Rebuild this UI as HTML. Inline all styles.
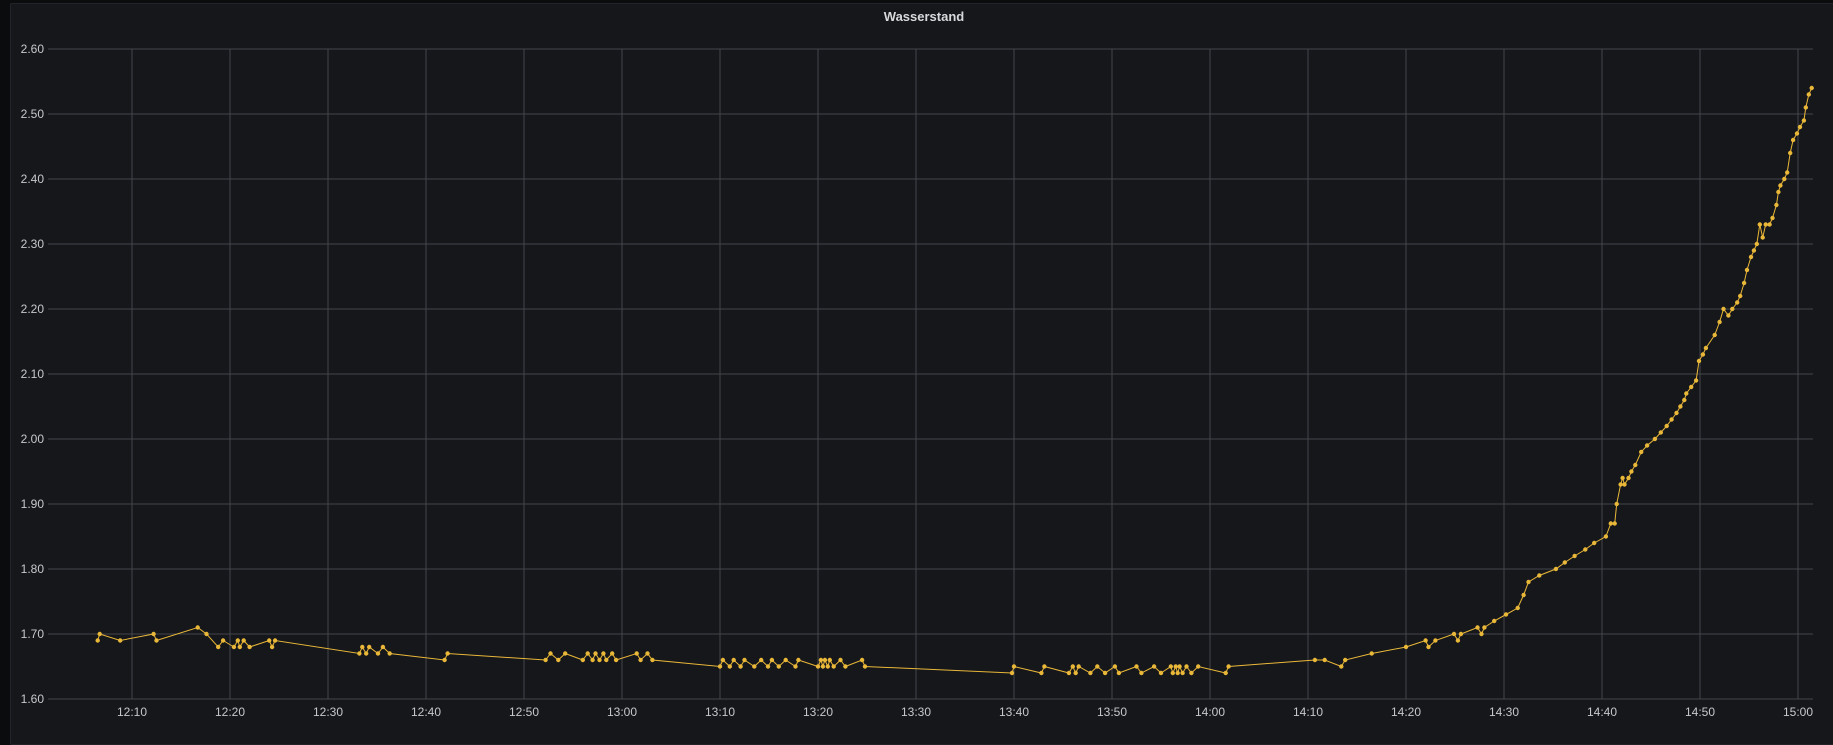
<!DOCTYPE html>
<html><head><meta charset="utf-8"><style>
html,body{margin:0;padding:0;background:#0b0c0e;width:1833px;height:730px;overflow:hidden;font-family:"Liberation Sans",sans-serif}
#panel{position:absolute;left:10px;top:3px;width:1830px;height:740px;background:#16171b;border:1px solid #222429;border-radius:2px}
#title{position:absolute;left:0;width:1848px;top:9px;text-align:center;color:#d8d9da;font-size:13px;font-weight:bold}
.yl{position:absolute;left:0;width:44px;text-align:right;color:#c7c8cc;font-size:12px;line-height:14px}
.xl{position:absolute;width:60px;text-align:center;color:#c7c8cc;font-size:12px;line-height:14px;top:705px}
svg{position:absolute;left:0;top:0}
</style></head><body>
<div id="panel"></div>
<div id="title">Wasserstand</div>
<svg id="s" width="1833" height="730"></svg>
<div class="yl" style="top:42px">2.60</div>
<div class="yl" style="top:107px">2.50</div>
<div class="yl" style="top:172px">2.40</div>
<div class="yl" style="top:237px">2.30</div>
<div class="yl" style="top:302px">2.20</div>
<div class="yl" style="top:367px">2.10</div>
<div class="yl" style="top:432px">2.00</div>
<div class="yl" style="top:497px">1.90</div>
<div class="yl" style="top:562px">1.80</div>
<div class="yl" style="top:627px">1.70</div>
<div class="yl" style="top:692px">1.60</div>
<div class="xl" style="left:102px">12:10</div>
<div class="xl" style="left:200px">12:20</div>
<div class="xl" style="left:298px">12:30</div>
<div class="xl" style="left:396px">12:40</div>
<div class="xl" style="left:494px">12:50</div>
<div class="xl" style="left:592px">13:00</div>
<div class="xl" style="left:690px">13:10</div>
<div class="xl" style="left:788px">13:20</div>
<div class="xl" style="left:886px">13:30</div>
<div class="xl" style="left:984px">13:40</div>
<div class="xl" style="left:1082px">13:50</div>
<div class="xl" style="left:1180px">14:00</div>
<div class="xl" style="left:1278px">14:10</div>
<div class="xl" style="left:1376px">14:20</div>
<div class="xl" style="left:1474px">14:30</div>
<div class="xl" style="left:1572px">14:40</div>
<div class="xl" style="left:1670px">14:50</div>
<div class="xl" style="left:1768px">15:00</div>
<script>
var d=[6.5,1.69,6.7,1.70,8.8,1.69,12.2,1.70,12.5,1.69,16.7,1.71,17.6,1.70,18.8,1.68,19.3,1.69,20.4,1.68,20.8,1.69,21,1.68,21.4,1.69,22,1.68,24,1.69,24.3,1.68,24.6,1.69,33.2,1.67,33.5,1.68,33.9,1.67,34.2,1.68,35.1,1.67,35.6,1.68,36.3,1.67,41.9,1.66,42.2,1.67,52.2,1.66,52.7,1.67,53.5,1.66,54.2,1.67,56,1.66,56.5,1.67,57,1.66,57.3,1.67,57.7,1.66,58.1,1.67,58.4,1.66,59,1.67,59.4,1.66,61.5,1.67,61.9,1.66,62.6,1.67,63.1,1.66,70,1.65,70.3,1.66,71,1.65,71.4,1.66,72.1,1.65,72.5,1.66,73.5,1.65,74.2,1.66,74.9,1.65,75.3,1.66,76,1.65,76.7,1.66,77.7,1.65,78,1.66,80,1.65,80.3,1.66,80.5,1.65,80.7,1.66,81,1.65,81.2,1.66,81.6,1.65,82.3,1.66,82.8,1.65,84.5,1.66,84.8,1.65,99.8,1.64,100,1.65,102.8,1.64,103.1,1.65,105.6,1.64,106,1.65,106.3,1.64,106.6,1.65,107.8,1.64,108.5,1.65,109.3,1.64,110.3,1.65,110.7,1.64,112.5,1.65,113,1.64,114.3,1.65,115,1.64,116,1.65,116.2,1.64,116.5,1.65,116.7,1.64,116.9,1.65,117.2,1.64,117.6,1.65,118.1,1.64,118.8,1.65,121.6,1.64,121.9,1.65,130.7,1.66,131.7,1.66,133.4,1.65,133.8,1.66,136.5,1.67,140,1.68,142,1.69,142.3,1.68,143,1.69,144.9,1.70,145.3,1.69,145.6,1.70,147.3,1.71,147.7,1.70,148,1.71,149,1.72,150.2,1.73,151.4,1.74,152,1.76,152.5,1.78,153.6,1.79,155.3,1.80,156.2,1.81,157.2,1.82,158.3,1.83,159.2,1.84,160.4,1.85,160.9,1.87,161.3,1.87,161.5,1.90,161.9,1.93,162.1,1.94,162.3,1.93,162.7,1.94,163,1.95,163.4,1.96,164,1.98,164.6,1.99,165.4,2.00,166,2.01,166.6,2.02,167.1,2.03,167.6,2.04,168,2.05,168.4,2.06,168.6,2.07,169.1,2.08,169.6,2.09,169.9,2.12,170.3,2.13,170.6,2.14,171.5,2.16,172,2.18,172.4,2.20,172.9,2.19,173.3,2.20,173.8,2.21,174.1,2.22,174.5,2.24,174.8,2.26,175.2,2.28,175.5,2.29,175.8,2.30,176.1,2.33,176.4,2.31,176.7,2.33,177.1,2.33,177.4,2.34,177.8,2.36,178,2.38,178.2,2.39,178.6,2.40,178.9,2.41,179.2,2.44,179.5,2.46,179.9,2.47,180.2,2.48,180.6,2.49,180.8,2.51,181.1,2.53,181.4,2.54];
var s='',i;
for(i=0;i<=10;i++){var y=49+i*65;s+='<line x1="48" x2="1813" y1="'+y+'" y2="'+y+'" stroke="#44464b" stroke-width="1"/>';}
for(i=0;i<18;i++){var x=132+i*98;s+='<line x1="'+x+'" x2="'+x+'" y1="49" y2="699" stroke="#44464b" stroke-width="1"/>';}
var pts=[],c='';
for(i=0;i<d.length;i+=2){var px=(132+(d[i]-10)*9.8).toFixed(1),py=(49+(2.6-d[i+1])*650).toFixed(1);pts.push(px+','+py);c+='<circle cx="'+px+'" cy="'+py+'" r="2.2"/>';}
s+='<polyline points="'+pts.join(' ')+'" fill="none" stroke="#EAB839" stroke-width="1"/>';
s+='<g fill="#EAB839">'+c+'</g>';
document.getElementById('s').innerHTML=s;
</script>
</body></html>
